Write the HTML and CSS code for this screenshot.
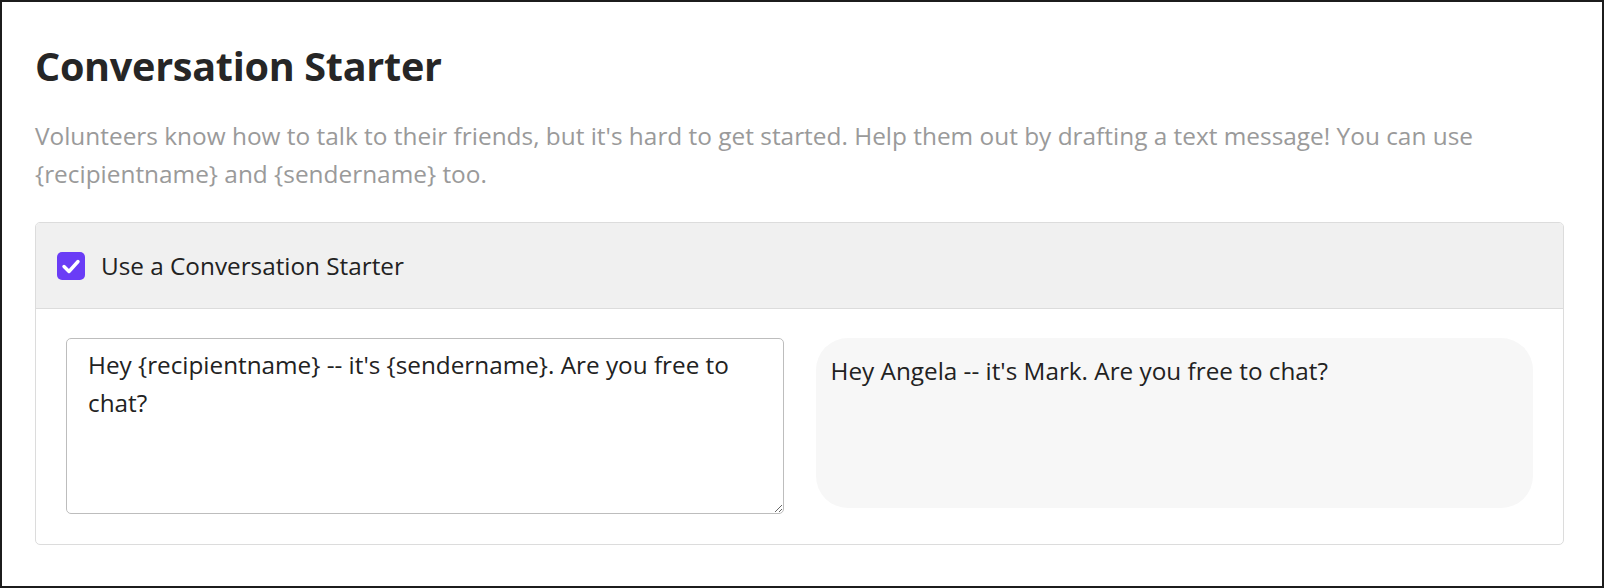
FILE: index.html
```html
<!DOCTYPE html>
<html lang="en">
<head>
<meta charset="utf-8">
<title>Conversation Starter</title>
<link rel="stylesheet" href="styles.css">
</head>
<body>
<div class="page">
  <h1 class="title">Conversation Starter</h1>
  <p class="desc">Volunteers know how to talk to their friends, but it's hard to get started. Help them out by drafting a text message! You can use {recipientname} and {sendername} too.</p>
  <div class="card">
    <div class="card-head">
      <span class="checkbox">
        <svg viewBox="0 0 28 28" width="28" height="28"><polyline points="7,14.5 12,19.5 21,9.5" fill="none" stroke="#fff" stroke-width="3.4" stroke-linecap="round" stroke-linejoin="round"/></svg>
      </span>
      <span class="label">Use a Conversation Starter</span>
    </div>
    <div class="card-body">
      <textarea class="editor">Hey {recipientname} -- it's {sendername}. Are you free to chat?</textarea>
      <div class="preview">Hey Angela -- it's Mark. Are you free to chat?</div>
    </div>
  </div>
</div>
</body>
</html>
```

FILE: styles.css
```css
html, body {
  margin: 0;
  padding: 0;
  background: #fff;
}

.page {
  box-sizing: border-box;
  width: 1604px;
  height: 588px;
  border: 2px solid #1c1c1c;
  padding: 0 38px 0 33px;
  font-family: "Open Sans", "Noto Sans", sans-serif;
  color: #222;
}

.title {
  margin: 38px 0 0 0;
  font-size: 39.6px;
  line-height: 52px;
  font-weight: 700;
  color: #262626;
  letter-spacing: -0.3px;
}

.desc {
  margin: 25px 0 0 0;
  font-size: 24.4px;
  line-height: 38px;
  color: #9a9a9a;
}

.card {
  margin-top: 29px;
  border: 1px solid #dcdcdc;
  border-radius: 5px;
  overflow: hidden;
}

.card-head {
  display: flex;
  align-items: center;
  gap: 16px;
  height: 85px;
  padding-left: 21px;
  background: #f0f0f0;
  border-bottom: 1px solid #dcdcdc;
}

.checkbox {
  display: flex;
  width: 28px;
  height: 28px;
  border-radius: 5px;
  background: #6a3cf6;
}

.label {
  font-size: 24.3px;
  color: #222;
}

.card-body {
  display: grid;
  grid-template-columns: 1fr 1fr;
  gap: 32px;
  padding: 29px 30px 30px 30px;
  align-items: start;
}

.editor {
  box-sizing: border-box;
  width: 100%;
  height: 176px;
  margin: 0;
  border: 1px solid #bdbdbd;
  border-radius: 5px;
  padding: 7px 21px;
  font-family: "Open Sans", "Noto Sans", sans-serif;
  font-size: 24.3px;
  line-height: 38px;
  color: #222;
  resize: vertical;
  outline: none;
}

.preview {
  box-sizing: border-box;
  height: 170px;
  border-radius: 32px;
  background: #f7f7f7;
  padding: 14px 15px;
  font-size: 24.3px;
  line-height: 38px;
  color: #222;
}
```
